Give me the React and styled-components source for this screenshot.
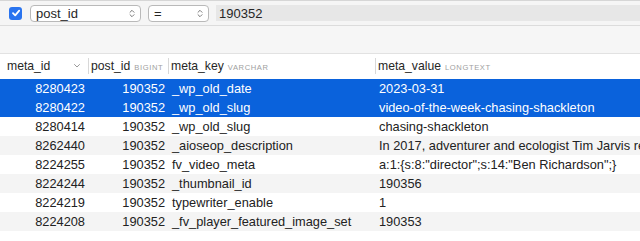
import React from "react";
import styled, { createGlobalStyle } from "styled-components";

const Global = createGlobalStyle`
  html, body { margin: 0; padding: 0; background: #ffffff; }
  body { font-family: "Liberation Sans", Arial, sans-serif; font-size: 12.8px; color: #222; }
  * { box-sizing: border-box; }
`;

const Page = styled.div`
  width: 640px;
  height: 241px;
  overflow: hidden;
  display: flex;
  flex-direction: column;
  background: #fff;
`;

const FilterBar = styled.div`
  height: 26px;
  flex: none;
  display: flex;
  align-items: center;
  gap: 7px;
  padding: 0 0 0 9px;
  background: #f5f5f5;
  border-top: 1px solid #d6d6d6;
  border-bottom: 1px solid #dcdcdc;
`;

const Check = styled.div`
  width: 13px;
  height: 13px;
  border-radius: 3px;
  background: #2a74ef;
  display: flex;
  align-items: center;
  justify-content: center;
  margin-right: 1px;
  flex: none;
`;

const Select = styled.div`
  width: ${(p) => p.$w}px;
  height: 17px;
  flex: none;
  display: flex;
  align-items: center;
  justify-content: space-between;
  padding: 0 5px 0 5px;
  background: #fff;
  border: 1px solid #b9b9b9;
  border-radius: 4px;
  font-size: 13px;
  color: #262626;
`;

const Input = styled.div`
  flex: 1;
  height: 16px;
  display: flex;
  align-items: center;
  padding-left: 3px;
  background: #e7e7e7;
  font-size: 13px;
  color: #262626;
`;

const Spacer = styled.div`
  height: 28px;
  flex: none;
  background: #f6f6f6;
  border-bottom: 1px solid #e2e2e2;
`;

const Table = styled.div`
  flex: 1;
  display: grid;
  grid-template-columns: 88px 80px 207px 1fr;
  grid-template-rows: 25px;
  grid-auto-rows: 19px;
  align-content: start;
`;

const Head = styled.div`
  display: flex;
  align-items: center;
  justify-content: space-between;
  background: #fff;
  padding-left: ${(p) => (p.$first ? "7px" : "0")};
  padding-right: 7px;
  padding-bottom: 1px;
`;

const HeadLabel = styled.div`
  display: flex;
  align-items: baseline;
  gap: 4px;
  height: 16px;
  line-height: 16px;
  padding-left: ${(p) => (p.$sep ? "2px" : "0")};
  border-left: ${(p) => (p.$sep ? "1px solid #d8d8d8" : "none")};
  font-size: 12.2px;
  color: #262626;
  white-space: nowrap;
`;

const TypeTag = styled.span`
  font-size: 7.6px;
  letter-spacing: 0.6px;
  color: #a0a0a0;
`;

const Cell = styled.div`
  line-height: 19px;
  padding: ${(p) => (p.$right ? "0 3px 0 0" : "0 0 0 4px")};
  text-align: ${(p) => (p.$right ? "right" : "left")};
  white-space: nowrap;
  overflow: hidden;
  background: ${(p) => (p.$sel ? "#0a62dc" : p.$odd ? "#f4f4f4" : "#fff")};
  color: ${(p) => (p.$sel ? "#fff" : "#222")};
  font-size: 12.8px;
`;

const Chevron = () => (
  <svg width="6" height="9" viewBox="0 0 6 9">
    <path d="M1 3.3 L3 1.3 L5 3.3" fill="none" stroke="#7a7a7a" strokeWidth="1" strokeLinecap="round" strokeLinejoin="round" />
    <path d="M1 5.7 L3 7.7 L5 5.7" fill="none" stroke="#7a7a7a" strokeWidth="1" strokeLinecap="round" strokeLinejoin="round" />
  </svg>
);

const SortDown = () => (
  <svg width="8" height="6" viewBox="0 0 8 6">
    <path d="M1.5 1.5 L4 4 L6.5 1.5" fill="none" stroke="#9a9a9a" strokeWidth="1" strokeLinecap="round" strokeLinejoin="round" />
  </svg>
);

const rows = [
  ["8280423", "190352", "_wp_old_date", "2023-03-31"],
  ["8280422", "190352", "_wp_old_slug", "video-of-the-week-chasing-shackleton"],
  ["8280414", "190352", "_wp_old_slug", "chasing-shackleton"],
  ["8262440", "190352", "_aioseop_description", "In 2017, adventurer and ecologist Tim Jarvis recreated Shackleton's epic voyage"],
  ["8224255", "190352", "fv_video_meta", 'a:1:{s:8:"director";s:14:"Ben Richardson";}'],
  ["8224244", "190352", "_thumbnail_id", "190356"],
  ["8224219", "190352", "typewriter_enable", "1"],
  ["8224208", "190352", "_fv_player_featured_image_set", "190353"],
];

export default function App() {
  return (
    <Page>
      <Global />
      <FilterBar>
        <Check>
          <svg width="10" height="10" viewBox="0 0 10 10">
            <path d="M2 5.2 L4.2 7.4 L8.2 2.6" fill="none" stroke="#fff" strokeWidth="1.8" strokeLinecap="round" strokeLinejoin="round" />
          </svg>
        </Check>
        <Select $w={111}>
          <span>post_id</span>
          <Chevron />
        </Select>
        <Select $w={61}>
          <span>=</span>
          <Chevron />
        </Select>
        <Input>190352</Input>
      </FilterBar>
      <Spacer />
      <Table>
        <Head $first>
          <HeadLabel>meta_id</HeadLabel>
          <SortDown />
        </Head>
        <Head>
          <HeadLabel $sep>
            post_id<TypeTag>BIGINT</TypeTag>
          </HeadLabel>
        </Head>
        <Head>
          <HeadLabel $sep>
            meta_key<TypeTag>VARCHAR</TypeTag>
          </HeadLabel>
        </Head>
        <Head>
          <HeadLabel $sep>
            meta_value<TypeTag>LONGTEXT</TypeTag>
          </HeadLabel>
        </Head>
        {rows.map((r, i) => {
          const sel = i < 2;
          const odd = i % 2 === 1;
          return (
            <React.Fragment key={r[0]}>
              <Cell $right $sel={sel} $odd={odd}>{r[0]}</Cell>
              <Cell $right $sel={sel} $odd={odd}>{r[1]}</Cell>
              <Cell $sel={sel} $odd={odd}>{r[2]}</Cell>
              <Cell $sel={sel} $odd={odd}>{r[3]}</Cell>
            </React.Fragment>
          );
        })}
      </Table>
    </Page>
  );
}
